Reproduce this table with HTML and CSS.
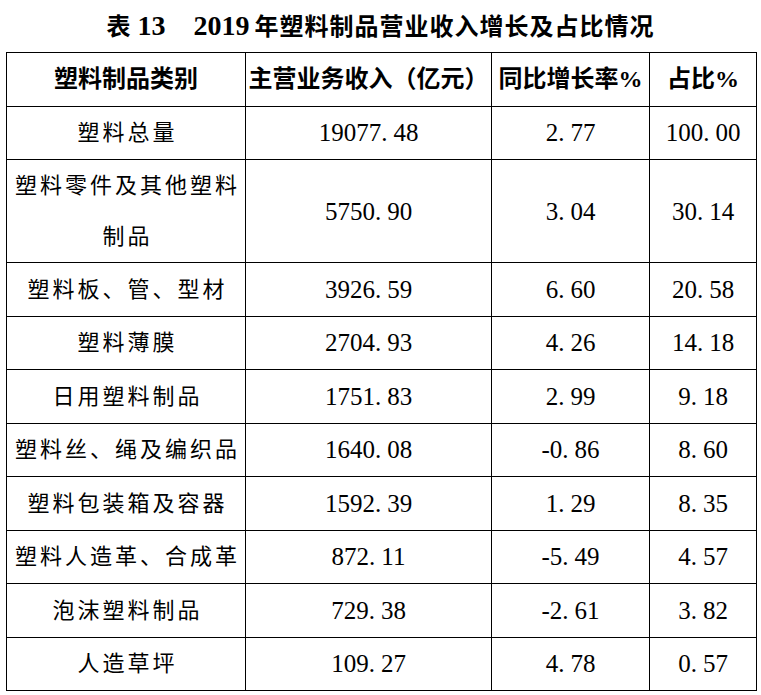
FILE: index.html
```html
<!DOCTYPE html>
<html lang="zh-CN">
<head>
<meta charset="utf-8">
<title>表13 2019年塑料制品营业收入增长及占比情况</title>
<link rel="stylesheet" href="styles.css">
</head>
<body>
<div class="page">
  <h1 class="title">表<span class="lat lead">13</span><span class="gap"></span><span class="lat">2019</span><span class="trail"></span>年塑料制品营业收入增长及占比情况</h1>
  <table class="data">
    <colgroup>
      <col class="c1"><col class="c2"><col class="c3"><col class="c4">
    </colgroup>
    <thead>
      <tr>
        <th>塑料制品类别</th>
        <th>主营业务收入（亿元）</th>
        <th>同比增长率%</th>
        <th>占比%</th>
      </tr>
    </thead>
    <tbody>
      <tr><td class="cat">塑料总量</td><td class="num">19077<span class="pt">.</span>48</td><td class="num">2<span class="pt">.</span>77</td><td class="num">100<span class="pt">.</span>00</td></tr>
      <tr><td class="cat two">塑料零件及其他塑料<br>制品</td><td class="num">5750<span class="pt">.</span>90</td><td class="num">3<span class="pt">.</span>04</td><td class="num">30<span class="pt">.</span>14</td></tr>
      <tr><td class="cat">塑料板、管、型材</td><td class="num">3926<span class="pt">.</span>59</td><td class="num">6<span class="pt">.</span>60</td><td class="num">20<span class="pt">.</span>58</td></tr>
      <tr><td class="cat">塑料薄膜</td><td class="num">2704<span class="pt">.</span>93</td><td class="num">4<span class="pt">.</span>26</td><td class="num">14<span class="pt">.</span>18</td></tr>
      <tr><td class="cat">日用塑料制品</td><td class="num">1751<span class="pt">.</span>83</td><td class="num">2<span class="pt">.</span>99</td><td class="num">9<span class="pt">.</span>18</td></tr>
      <tr><td class="cat">塑料丝、绳及编织品</td><td class="num">1640<span class="pt">.</span>08</td><td class="num">-0<span class="pt">.</span>86</td><td class="num">8<span class="pt">.</span>60</td></tr>
      <tr><td class="cat">塑料包装箱及容器</td><td class="num">1592<span class="pt">.</span>39</td><td class="num">1<span class="pt">.</span>29</td><td class="num">8<span class="pt">.</span>35</td></tr>
      <tr><td class="cat">塑料人造革、合成革</td><td class="num">872<span class="pt">.</span>11</td><td class="num">-5<span class="pt">.</span>49</td><td class="num">4<span class="pt">.</span>57</td></tr>
      <tr><td class="cat">泡沫塑料制品</td><td class="num">729<span class="pt">.</span>38</td><td class="num">-2<span class="pt">.</span>61</td><td class="num">3<span class="pt">.</span>82</td></tr>
      <tr><td class="cat">人造草坪</td><td class="num">109<span class="pt">.</span>27</td><td class="num">4<span class="pt">.</span>78</td><td class="num">0<span class="pt">.</span>57</td></tr>
    </tbody>
  </table>
</div>
</body>
</html>
```

FILE: styles.css
```css
html, body {
  margin: 0;
  padding: 0;
  background: #ffffff;
}

.page {
  width: 761px;
  font-family: "Liberation Serif", "Noto Sans CJK SC", serif;
  color: #000000;
}

.title {
  margin: 0;
  height: 52px;
  line-height: 52px;
  text-align: center;
  font-size: 24px;
  font-weight: 700;
  letter-spacing: 1px;
  white-space: nowrap;
}

.title .lat {
  font-size: 28px;
  letter-spacing: 0;
}

.title .lead {
  margin-left: 6px;
}

.title .gap {
  display: inline-block;
  width: 28px;
}

.title .trail {
  display: inline-block;
  width: 5px;
}

.data {
  margin-left: 6px;
  width: 750px;
  border-collapse: collapse;
  table-layout: fixed;
}

.c1 { width: 239px; }
.c2 { width: 246px; }
.c3 { width: 158px; }
.c4 { width: 107px; }

.data th,
.data td {
  border: 1px solid #000000;
  padding: 0;
  text-align: center;
  vertical-align: middle;
  height: 52.5px;
}

.data th {
  font-size: 24px;
  font-weight: 700;
  line-height: 51px;
  white-space: nowrap;
}

.cat {
  font-size: 22px;
  letter-spacing: 3px;
  padding-left: 3px !important;
  line-height: 51px;
}

.cat.two {
  line-height: 51px;
}

.num {
  font-size: 25px;
  line-height: 51px;
}

.pt {
  letter-spacing: 6px;
}
```
